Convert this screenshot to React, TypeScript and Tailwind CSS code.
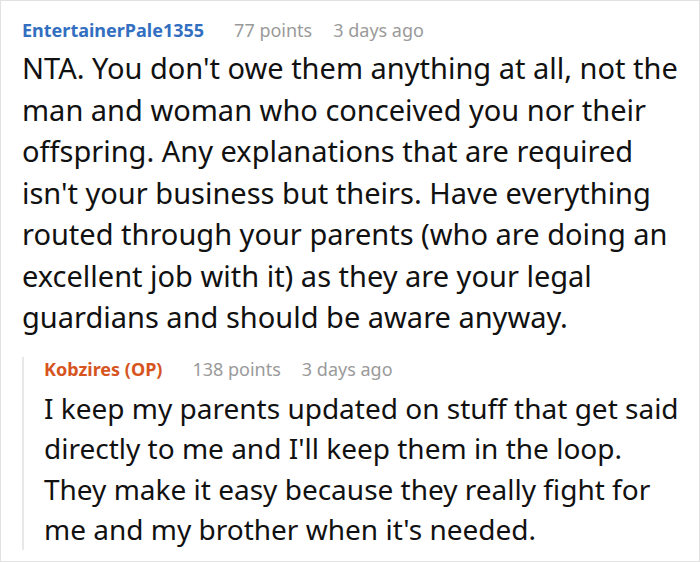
type HeaderProps = {
  author: string;
  authorClass: string;
  points: string;
  age: string;
};

function CommentHeader({ author, authorClass, points, age }: HeaderProps) {
  return (
    <div className="flex items-baseline text-[18px] leading-[24px]">
      <span className={`font-bold ${authorClass}`}>{author}</span>
      <span className="ml-[30px] text-[#9a9a9a]">{points}</span>
      <span className="ml-[21px] text-[#9a9a9a]">{age}</span>
    </div>
  );
}

export default function App() {
  return (
    <div className="w-[700px] h-[562px] bg-white border border-[#e2e2e2] font-['Noto_Sans',sans-serif] overflow-hidden">
      <div className="pl-[21px] pr-[16px] pt-[17px]">
        <CommentHeader author="EntertainerPale1355" authorClass="text-[#336fc1]" points="77 points" age="3 days ago" />
        <p className="mt-[5px] text-[29px] leading-[41.5px] text-[#111]">
          NTA. You don't owe them anything at all, not the man and woman who conceived you nor their offspring. Any explanations that are required isn't your business but theirs. Have everything routed through your parents (who are doing an excellent job with it) as they are your legal guardians and should be aware anyway.
        </p>
        <div className="mt-[19px] border-l-2 border-[#e8e8e8] pl-[20px]">
          <CommentHeader author="Kobzires (OP)" authorClass="text-[#d6541e]" points="138 points" age="3 days ago" />
          <p className="mt-[7px] text-[28px] leading-[40.6px] text-[#111]">
            I keep my parents updated on stuff that get said
            <br />
            directly to me and I'll keep them in the loop.
            <br />
            They make it easy because they really fight for
            <br />
            me and my brother when it's needed.
          </p>
        </div>
      </div>
    </div>
  );
}
